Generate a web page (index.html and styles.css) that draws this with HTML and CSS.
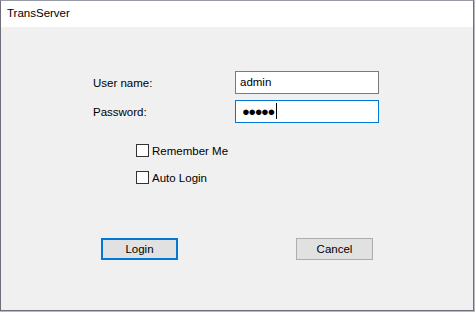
FILE: index.html
```html
<!DOCTYPE html>
<html lang="en">
<head>
    <meta charset="UTF-8">
    <title>TransServer</title>
    <link rel="stylesheet" href="styles.css">
</head>
<body>
    <div class="window">
        <div class="titlebar">TransServer</div>
        <div class="content">
            <div class="form">
                <label class="label">User name:</label>
                <div class="field">admin</div>
                <label class="label">Password:</label>
                <div class="field focused"><span class="dots">●●●●●</span><span class="caret"></span></div>
            </div>

            <div class="checks">
                <div class="check"><span class="box"></span>Remember Me</div>
                <div class="check"><span class="box"></span>Auto Login</div>
            </div>

            <div class="buttons">
                <button class="btn default">Login</button>
                <button class="btn">Cancel</button>
            </div>
        </div>
    </div>
</body>
</html>
```

FILE: styles.css
```css
* {
    margin: 0;
    padding: 0;
    box-sizing: border-box;
}

body {
    width: 475px;
    height: 312px;
    background: #b9b8c9;
    font-family: "Segoe UI", "Liberation Sans", Arial, sans-serif;
    font-size: 11.5px;
    color: #000;
    overflow: hidden;
}

.window {
    width: 474px;
    height: 311px;
    border: 1px solid #6f6f7c;
    border-top-color: #9a9aa6;
    background: #f0f0f0;
    display: flex;
    flex-direction: column;
}

.titlebar {
    height: 26px;
    background: #fff;
    padding: 6px 0 0 6px;
}

.content {
    flex: 1;
    padding-top: 44px;
}

.form {
    display: grid;
    grid-template-columns: 142px 144px;
    grid-auto-rows: 23px;
    row-gap: 6px;
    padding-left: 92px;
    align-items: center;
}

.field {
    height: 23px;
    background: #fff;
    border: 1px solid #7a7a7a;
    padding: 4px 0 0 4px;
    display: flex;
    align-items: flex-start;
}

.field.focused {
    border-color: #0078d7;
    padding: 2px 0 0 6px;
}

.dots {
    font-size: 13px;
    letter-spacing: -1.5px;
    line-height: 16px;
    margin-top: 1px;
}

.caret {
    width: 1px;
    height: 16px;
    margin-left: 2px;
    background: #000;
}

.checks {
    margin-top: 21px;
    padding-left: 135px;
    display: flex;
    flex-direction: column;
    gap: 14px;
}

.check {
    display: flex;
    align-items: center;
    gap: 3px;
    height: 13px;
}

.box {
    width: 13px;
    height: 13px;
    background: #fff;
    border: 1px solid #333;
}

.buttons {
    margin-top: 54px;
    padding-left: 100px;
    display: flex;
    gap: 118px;
}

.btn {
    width: 77px;
    height: 22px;
    background: #e1e1e1;
    border: 1px solid #adadad;
    font-family: inherit;
    font-size: 11.5px;
    color: #000;
}

.btn.default {
    border: 2px solid #0078d7;
}
```
